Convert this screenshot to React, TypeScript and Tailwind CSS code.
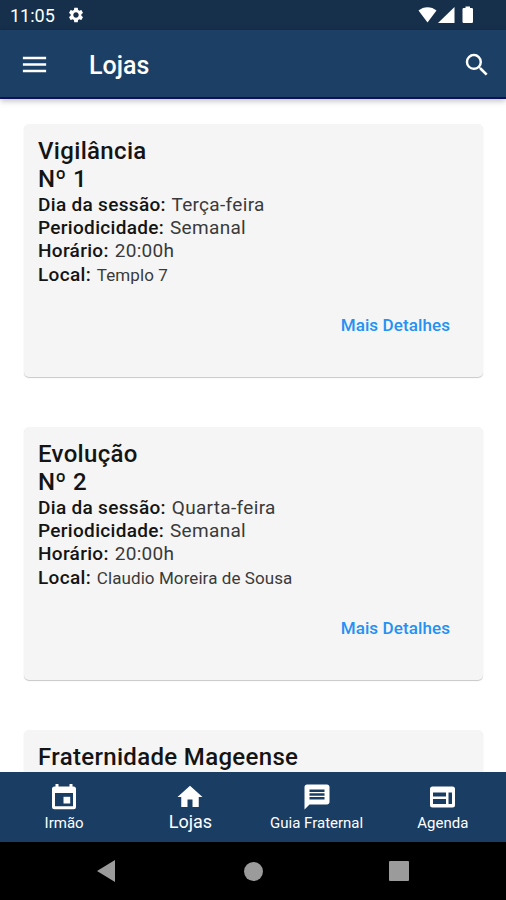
import React from 'react';
import { MdHome, MdMenu, MdMessage, MdSearch, MdSettings } from 'react-icons/md';

const lodges = [
  { name: 'Vigilância', number: 'Nº 1', day: 'Terça-feira', frequency: 'Semanal', time: '20:00h', place: 'Templo 7' },
  { name: 'Evolução', number: 'Nº 2', day: 'Quarta-feira', frequency: 'Semanal', time: '20:00h', place: 'Claudio Moreira de Sousa' },
];

const CalendarIcon: React.FC = () => (
  <svg width="24" height="30" viewBox="0 0 24 30" fill="currentColor" fillRule="evenodd">
    <path d="M3.500 2H6.500V4.500H17.500V2H20.500V4.500H21.500A2.500 2.500 0 0 1 24 7V24.700A2.500 2.500 0 0 1 21.500 27.200H2.500A2.500 2.500 0 0 1 0 24.700V7A2.500 2.500 0 0 1 2.500 4.500H3.500ZM3 11V24.300H21V11Z" />
    <path d="M11.500 14.800h6.700v6.700h-6.700Z" />
  </svg>
);

const AgendaIcon: React.FC = () => (
  <svg width="25" height="30" viewBox="0 0 25 30" fill="currentColor" fillRule="evenodd">
    <path d="M2.500 4.500h20A2.500 2.500 0 0 1 25 7v16a2.500 2.500 0 0 1-2.500 2.500h-20A2.500 2.500 0 0 1 0 23V7a2.500 2.500 0 0 1 2.500-2.500ZM3 10.500v4h13v-4ZM3 17v5h13v-5ZM18.500 10.500V22H22V10.500Z" />
  </svg>
);

const tabs = [
  { label: 'Irmão', icon: <CalendarIcon />, active: false },
  { label: 'Lojas', icon: <MdHome size={30} />, active: true },
  { label: 'Guia Fraternal', icon: <MdMessage size={30} />, active: false },
  { label: 'Agenda', icon: <AgendaIcon />, active: false },
];

const StatusBar: React.FC = () => (
  <div className="h-[30px] shrink-0 bg-[#162f4b] flex items-center justify-between pl-[10px] pr-8 text-white">
    <div className="flex items-center gap-3">
      <span className="text-[18px] leading-[30px] pt-[2px]">11:05</span>
      <MdSettings size={18} />
    </div>
    <svg width="56" height="18" viewBox="0 0 56 18" fill="currentColor">
      <path d="M.5 4.500C5.500 0 13.500 0 18.500 4.500L9.500 16.500Z" />
      <path d="M36.500 1v16H20Z" />
      <path d="M47.500 .5h4.500V2h1.800a1.200 1.200 0 0 1 1.200 1.200v12.600a1.200 1.200 0 0 1-1.200 1.200h-8.100a1.200 1.200 0 0 1-1.200-1.200V3.200A1.200 1.200 0 0 1 45.700 2H47.500Z" />
    </svg>
  </div>
);

const Card: React.FC<{ children: React.ReactNode }> = ({ children }) => (
  <article className="h-[253px] shrink-0 bg-[#f5f5f5] rounded-[5px] px-[14px] pt-[13px] shadow-[0_1px_1px_rgba(0,0,0,0.22)] text-[#141414]">
    {children}
  </article>
);

const Title: React.FC<{ children: React.ReactNode }> = ({ children }) => (
  <h2 className="text-[24px] leading-7 font-medium tracking-[0.33px]">{children}</h2>
);

const Row: React.FC<{ label: string; children: React.ReactNode }> = ({ label, children }) => (
  <p>
    <b className="mr-[0.8px] font-medium text-[#141414]">{label}:</b> {children}
  </p>
);

const App: React.FC = () => {
  return (
    <div className="h-[900px] w-[506px] flex flex-col overflow-hidden bg-white font-['Roboto',sans-serif]">
      <StatusBar />
      <header className="relative z-10 h-[69px] shrink-0 bg-[#1c3f65] border-b-2 border-[#100f5c] flex items-center pl-[19px] pr-[14px] pt-[2px] text-white shadow-[0_2px_6px_rgba(0,0,0,0.25)]">
        <MdMenu size={31} />
        <h1 className="ml-[39px] pt-[2px] text-[25px] leading-8 font-medium">Lojas</h1>
        <MdSearch size={30} className="ml-auto" />
      </header>

      <main className="flex-1 min-h-0 overflow-hidden flex flex-col gap-[50px] px-6 pt-[25px] pr-[23px]">
        {lodges.map((lodge) => (
          <Card key={lodge.number}>
            <Title>{lodge.name}</Title>
            <Title>{lodge.number}</Title>
            <div className="-mt-[0.4px] text-[19px] leading-[23.4px] tracking-[0.32px] text-[#3a3a3a]">
              <Row label="Dia da sessão">{lodge.day}</Row>
              <Row label="Periodicidade">{lodge.frequency}</Row>
              <Row label="Horário">{lodge.time}</Row>
              <Row label="Local">
                <span className="text-[17px] tracking-[0.08px]">{lodge.place}</span>
              </Row>
            </div>
            <div className="flex justify-end pr-[19px] mt-[25.4px]">
              <button className="text-[17px] leading-6 font-medium tracking-[0.1px] text-[#2491f3]">Mais Detalhes</button>
            </div>
          </Card>
        ))}
        <Card>
          <Title>Fraternidade Mageense</Title>
        </Card>
      </main>

      <nav className="h-[70px] shrink-0 bg-[#1a3d63] grid grid-cols-4 pl-px text-white">
        {tabs.map(({ label, icon, active }) => (
          <button key={label} className="flex flex-col items-center pt-[9px]">
            <span className="h-[31px] flex items-end">{icon}</span>
            <span className={active ? 'text-[18px] leading-5' : 'text-[15px] leading-[22px]'}>{label}</span>
          </button>
        ))}
      </nav>

      {/* Android navigation buttons */}
      <div className="h-[58px] shrink-0 bg-black flex items-center justify-between pl-[97px] pr-[97px] text-[#9b9b9b]">
        <svg width="18" height="22" viewBox="0 0 18 22" fill="currentColor"><path d="M18 0v22L0 11Z" /></svg>
        <span className="ml-[2px] size-[19px] rounded-full bg-[#9b9b9b]" />
        <span className="size-5 rounded-[1px] bg-[#9b9b9b]" />
      </div>
    </div>
  );
};

export default App;
